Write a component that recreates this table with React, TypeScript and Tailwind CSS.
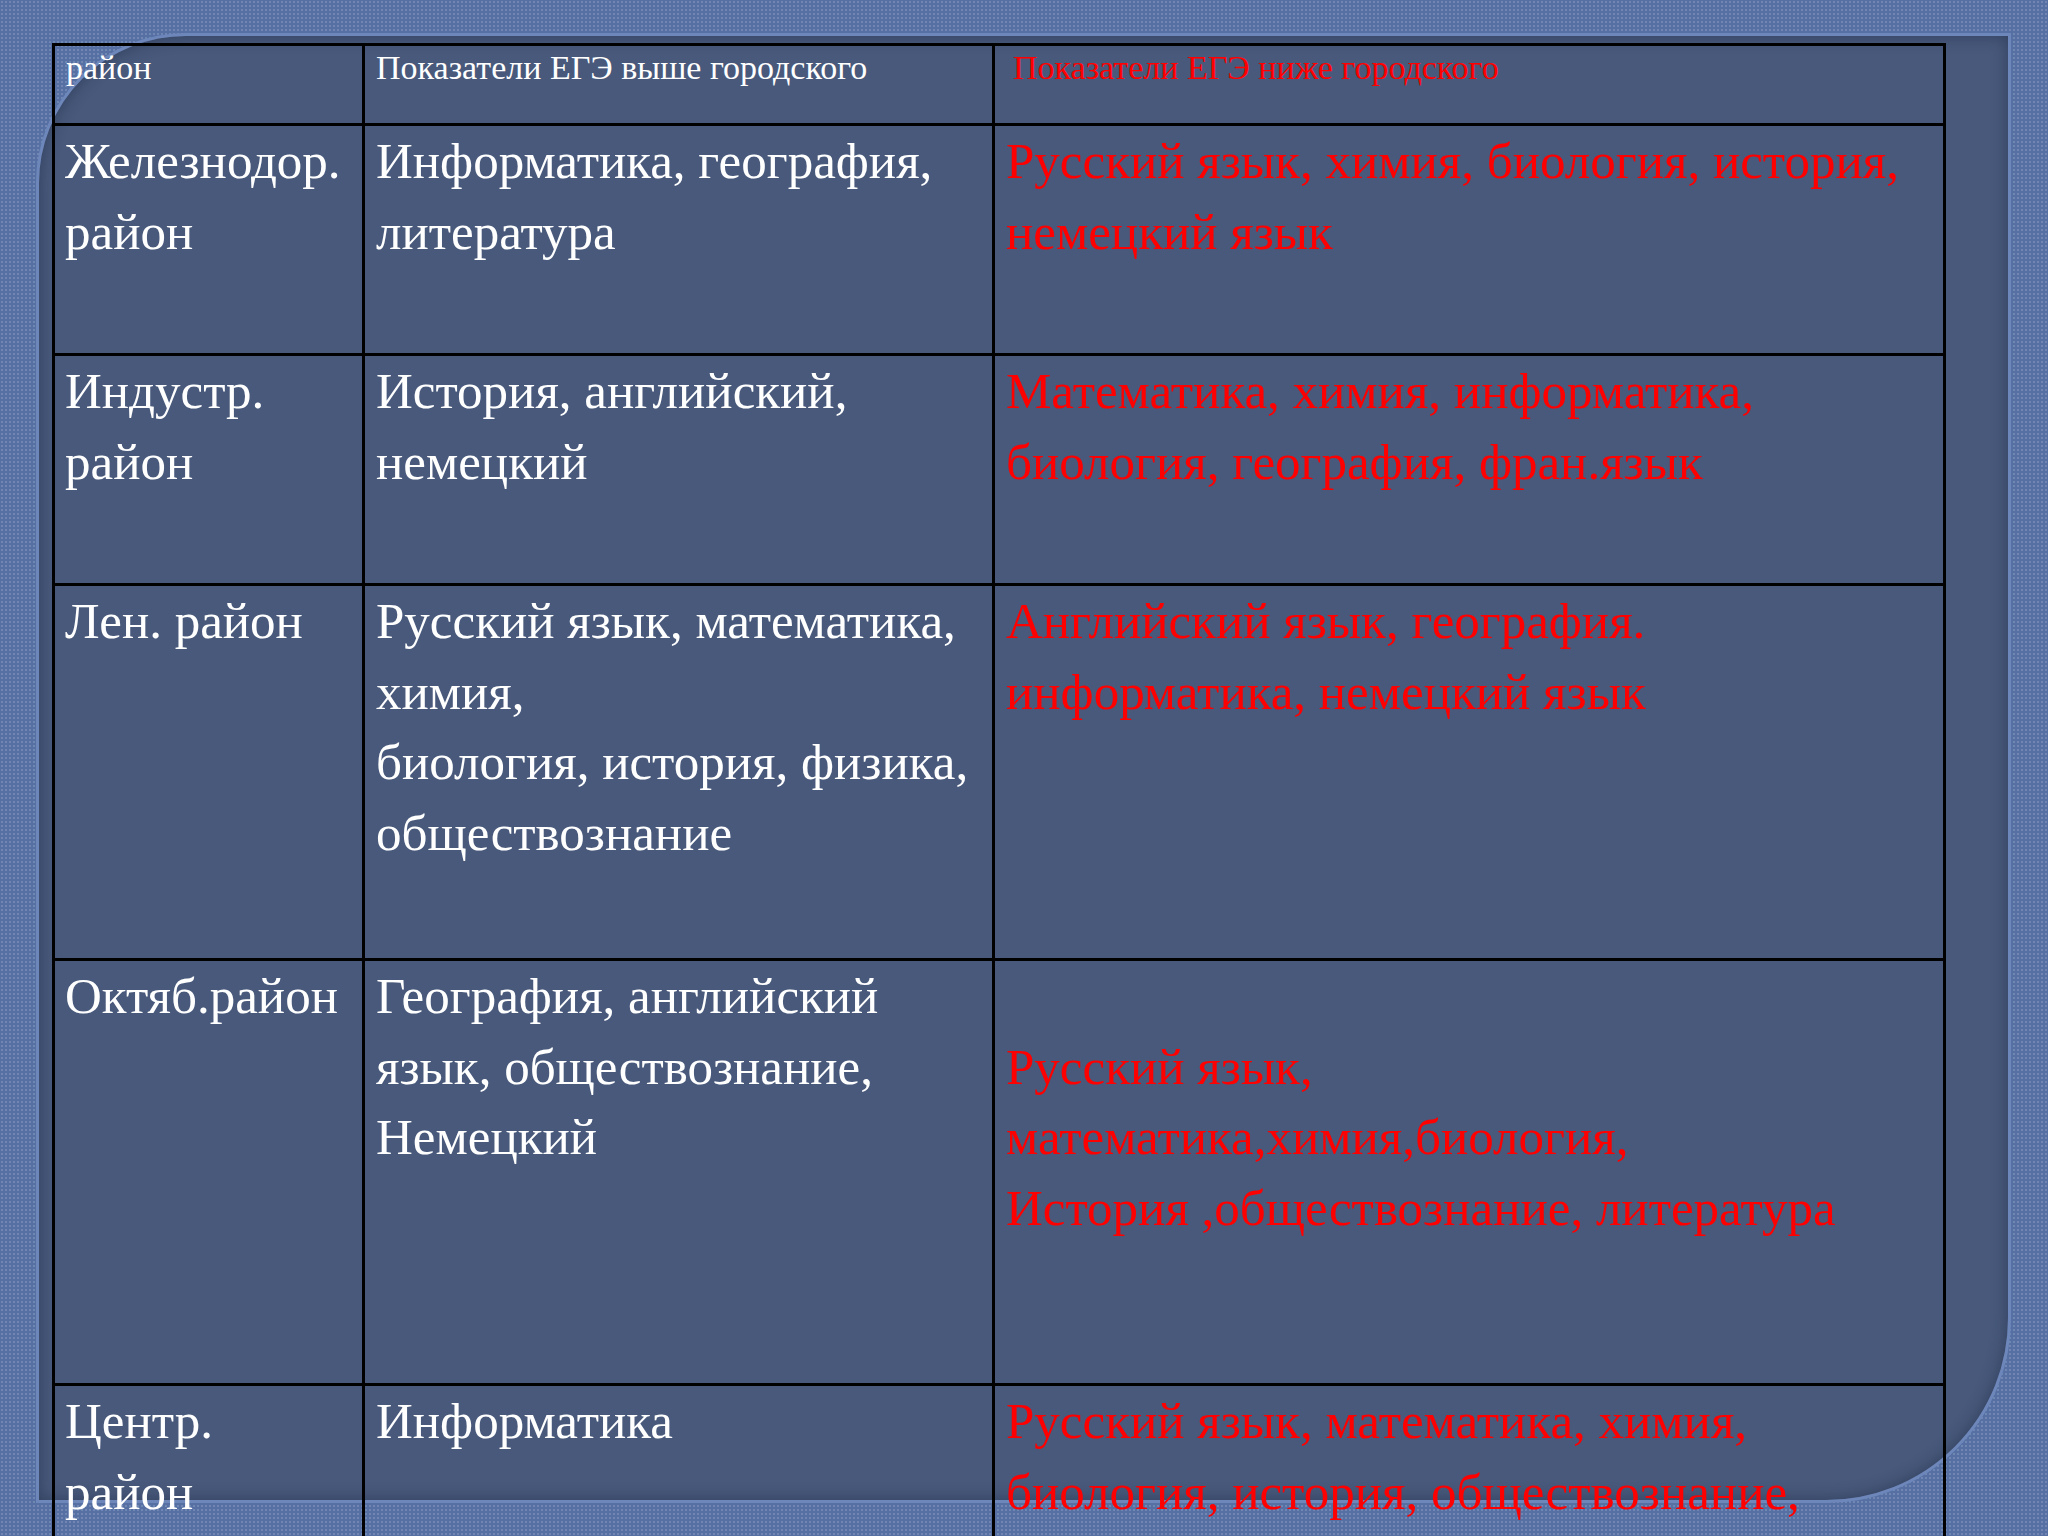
const rows = [
  {
    h: "h-[230px]",
    district: ["Железнодор.", "район"],
    above: ["Информатика, география,", "литература"],
    below: ["Русский язык, химия, биология, история,", "немецкий язык"],
  },
  {
    h: "h-[230px]",
    district: ["Индустр.", "район"],
    above: ["История, английский,", "немецкий"],
    below: ["Математика, химия, информатика,", "биология, география, фран.язык"],
  },
  {
    h: "h-[375px]",
    district: ["Лен. район"],
    above: ["Русский язык, математика,", "химия,", "биология, история, физика,", "обществознание"],
    below: ["Английский язык, география.", "информатика, немецкий язык"],
  },
  {
    h: "h-[425px]",
    district: ["Октяб.район"],
    above: ["География, английский", "язык, обществознание,", "Немецкий"],
    below: ["\u00a0", "Русский язык,", "математика,химия,биология,", "История ,обществознание, литература"],
  },
  {
    h: "h-[300px]",
    district: ["Центр.", "район"],
    above: ["Информатика"],
    below: ["Русский язык, математика, химия,", "биология, история, обществознание,"],
  },
];

function Lines({ lines }: { lines: string[] }) {
  return (
    <>
      {lines.map((l, i) => (
        <div key={i} className="whitespace-nowrap">
          {l}
        </div>
      ))}
    </>
  );
}

export default function App() {
  return (
    <div
      className="w-[2048px] h-[1536px] overflow-hidden bg-[#5670a4] bg-[radial-gradient(rgba(255,255,255,0.16)_1px,transparent_1.3px)] bg-[length:4px_4px] pt-[33px] pl-[36px]"
      style={{ fontFamily: '"Liberation Serif", "Times New Roman", serif' }}
    >
      {/* slide panel */}
      <div className="w-[1975px] h-[1470px] border-[3px] border-[#6e87bb] bg-[#48597b] rounded-tl-[150px] rounded-br-[185px] shadow-[inset_0_0_16px_rgba(20,30,55,0.45)] pl-[13px] pt-[7px]">
        <table className="table-fixed border-collapse w-[1891px] text-white">
          <colgroup>
            <col className="w-[310px]" />
            <col className="w-[630px]" />
            <col className="w-[951px]" />
          </colgroup>
          <tbody>
            <tr className="h-[80px]">
              <td className="border-[3px] border-black align-top pl-[11px] pt-[6px] text-[34px] leading-[32px] whitespace-nowrap">
                район
              </td>
              <td className="border-[3px] border-black align-top pl-[11px] pt-[6px] text-[34px] leading-[32px] whitespace-nowrap">
                Показатели ЕГЭ выше городского
              </td>
              <td className="border-[3px] border-black align-top pl-[18px] pt-[6px] text-[34px] leading-[32px] whitespace-nowrap text-[#ff0000]">
                Показатели ЕГЭ ниже городского
              </td>
            </tr>
            {rows.map((r, i) => (
              <tr key={i} className={r.h}>
                <td className="border-[3px] border-black align-top pl-[10px] pt-0 text-[51px] leading-[70.5px]">
                  <Lines lines={r.district} />
                </td>
                <td className="border-[3px] border-black align-top pl-[11px] pt-0 text-[51px] leading-[70.5px]">
                  <Lines lines={r.above} />
                </td>
                <td className="border-[3px] border-black align-top pl-[11px] pt-0 text-[51px] leading-[70.5px] text-[#ff0000]">
                  <Lines lines={r.below} />
                </td>
              </tr>
            ))}
          </tbody>
        </table>
      </div>
    </div>
  );
}
